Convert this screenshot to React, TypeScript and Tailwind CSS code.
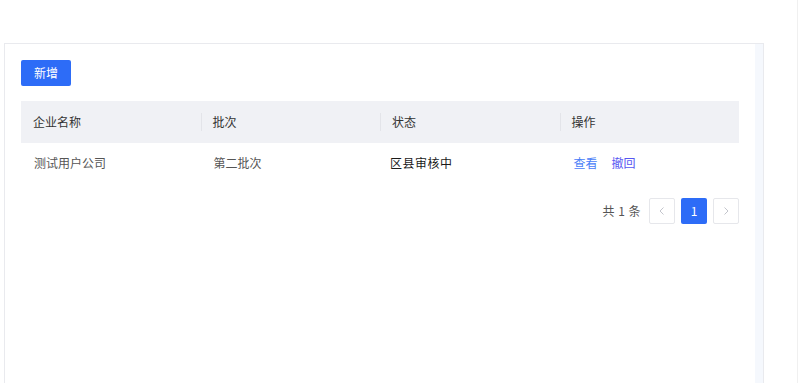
import React from "react";

const font = { fontFamily: '"Noto Sans CJK SC", "Noto Sans", sans-serif' };

const COLUMNS = ["企业名称", "批次", "状态", "操作"];

export default function App() {
  return (
    <div
      className="w-[800px] h-[383px] overflow-hidden bg-white relative"
      style={font}
    >
      <div className="flex pt-[43px] pl-[4px] h-full">
        <div className="w-[760px] h-[400px] border border-[#e9eaee] flex">
          <div className="flex-1 pl-[16px] pr-[16px] pt-[16px]">
            <button className="block w-[50px] h-[26px] rounded-[2px] bg-[#2d6cf7] text-white text-[12px] leading-[26px]">
              新增
            </button>

            <div className="mt-[15px]">
              <div className="grid grid-cols-4 h-[42px] bg-[#f0f1f5] items-center">
                {COLUMNS.map((c, i) => (
                  <div key={c} className="relative h-full flex items-center pl-[12px] text-[12px] text-[#333]">
                    {i > 0 && (
                      <span className="absolute left-0 top-[12px] h-[18px] w-px bg-[#e3e4e9]" />
                    )}
                    {c}
                  </div>
                ))}
              </div>
              <div className="grid grid-cols-4 h-[40px] items-center text-[12px]">
                <div className="pl-[13px] text-[#555]">测试用户公司</div>
                <div className="pl-[13px] text-[#555]">第二批次</div>
                <div className="pl-[10px] text-[#1a1a1a] tracking-[0.5px]">区县审核中</div>
                <div className="pl-[14px] flex gap-[14px]">
                  <span className="text-[#4a80f8]">查看</span>
                  <span className="text-[#5757f2]">撤回</span>
                </div>
              </div>
            </div>

            <div className="flex justify-end items-center mt-[15px] gap-[6px]">
              <span className="text-[12px] text-[#555] mr-[2px] tracking-[0.5px]">共 1 条</span>
              <div className="w-[26px] h-[26px] border border-[#e6e7eb] rounded-[2px] flex items-center justify-center">
                <svg width="10" height="10" viewBox="0 0 10 10" fill="none" stroke="#c3c5cc" strokeWidth="1">
                  <path d="M6.5 1.5 L3 5 L6.5 8.5" />
                </svg>
              </div>
              <div className="w-[26px] h-[26px] rounded-[2px] bg-[#2d6cf7] text-white text-[12px] flex items-center justify-center">
                1
              </div>
              <div className="w-[26px] h-[26px] border border-[#e6e7eb] rounded-[2px] flex items-center justify-center">
                <svg width="10" height="10" viewBox="0 0 10 10" fill="none" stroke="#c3c5cc" strokeWidth="1">
                  <path d="M3.5 1.5 L7 5 L3.5 8.5" />
                </svg>
              </div>
            </div>
          </div>
          <div className="w-[8px] bg-[#f5f8fd]" />
        </div>
      </div>
      <div className="absolute left-[797px] top-0 w-px h-full bg-[#f0f0f0]" />
    </div>
  );
}
